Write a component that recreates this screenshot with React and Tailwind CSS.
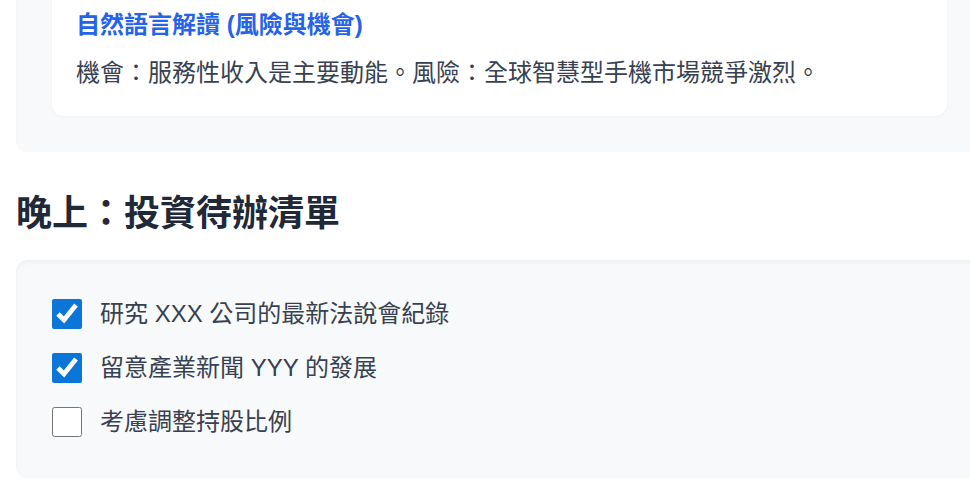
import React, { useState } from 'react';

const todos = [
  { id: 1, text: '研究 XXX 公司的最新法說會紀錄', done: true },
  { id: 2, text: '留意產業新聞 YYY 的發展', done: true },
  { id: 3, text: '考慮調整持股比例', done: false },
];

function App() {
  const [items, setItems] = useState(todos);

  const toggle = (id) => {
    setItems(items.map((t) => (t.id === id ? { ...t, done: !t.done } : t)));
  };

  return (
    <div
      className="w-[970px] h-[492px] overflow-hidden bg-white"
      style={{ fontFamily: '"Liberation Sans", "Noto Sans CJK TC", sans-serif' }}
    >
      <div className="-mt-[53px] pl-4 w-[983px]">
        {/* Analysis panel */}
        <section className="bg-[#f8f9fa] rounded-xl p-9 shadow-[inset_0_2px_4px_rgba(0,0,0,0.04)]">
          <div className="bg-white rounded-xl p-6 pb-[25px] shadow-[0_1px_3px_rgba(0,0,0,0.04)]">
            <h3 className="text-[24px] leading-[36px] font-bold text-[#2563eb]">
              自然語言解讀 (風險與機會)
            </h3>
            <p className="mt-3 text-[24px] leading-[36px] text-[#374151]">
              機會：服務性收入是主要動能。風險：全球智慧型手機市場競爭激烈。
            </p>
          </div>
        </section>

        {/* Evening todo list */}
        <h2 className="mt-[40px] mb-[25px] text-[36px] leading-[43px] font-bold text-[#1f2937]">
          晚上：投資待辦清單
        </h2>

        <section className="bg-[#f8f9fa] rounded-xl px-9 pt-9 pb-[38px] shadow-[inset_0_2px_4px_rgba(0,0,0,0.05)]">
          <ul className="flex flex-col gap-[18px]">
            {items.map((t) => (
              <li key={t.id} className="flex items-center h-[36px]">
                <input
                  type="checkbox"
                  checked={t.done}
                  onChange={() => toggle(t.id)}
                  className="w-[30px] h-[30px] m-0 accent-[#0b76d8] shrink-0"
                />
                <span className="ml-[18px] text-[24px] leading-[36px] text-[#374151]">{t.text}</span>
              </li>
            ))}
          </ul>
        </section>
      </div>
    </div>
  );
}

export default App;
